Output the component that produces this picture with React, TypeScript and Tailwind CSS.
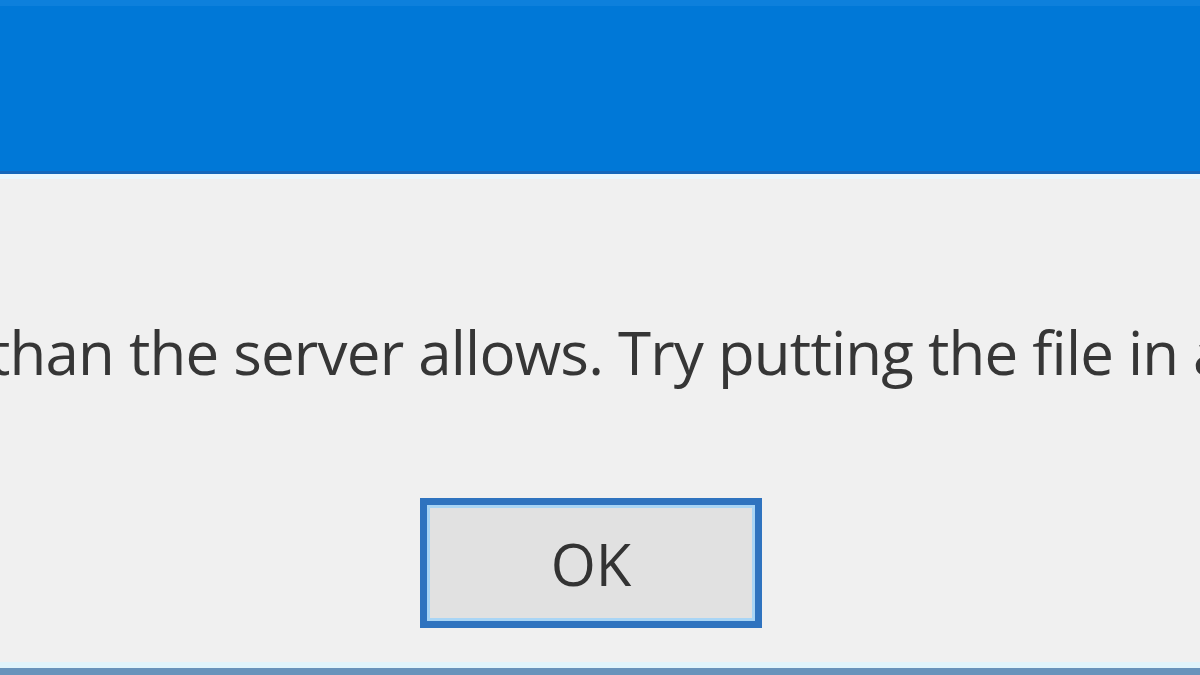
import React from "react";

const App = () => {
  return (
    <div
      className="w-[1200px] h-[675px] overflow-hidden flex flex-col bg-[#f0f0f0]"
      style={{ fontFamily: '"Open Sans", "Noto Sans", sans-serif' }}
    >
      {/* title bar */}
      <div className="h-[174px] shrink-0 bg-[#0078d7] border-t-[6px] border-[#0d80dc] border-b-[3px] border-b-[#1468bb]" />
      <div className="h-[5px] shrink-0 bg-[#eaf8fd]" />

      {/* message */}
      <div className="flex-1 flex flex-col">
        <div className="h-[133px]" />
        <div className="overflow-hidden whitespace-nowrap">
          <p className="ml-[-11px] text-[60px] leading-[80px] font-medium text-[#363636] tracking-[-0.8px]">
            than the server allows. Try putting the file in a folder
          </p>
        </div>
        <div className="flex justify-center pr-[18px] mt-[106px]">
          <button className="w-[342px] h-[130px] border-[7px] border-[#2f73bf] bg-[#e1e1e1] ring-[3px] ring-inset ring-[#a9d5f5] text-[58px] text-[#333] flex items-center justify-center">
            OK
          </button>
        </div>
      </div>

      {/* bottom edge */}
      <div className="h-[6px] shrink-0 bg-[#e0f4fb]" />
      <div className="h-[7px] shrink-0 bg-[#6893bb]" />
    </div>
  );
};

export default App;
